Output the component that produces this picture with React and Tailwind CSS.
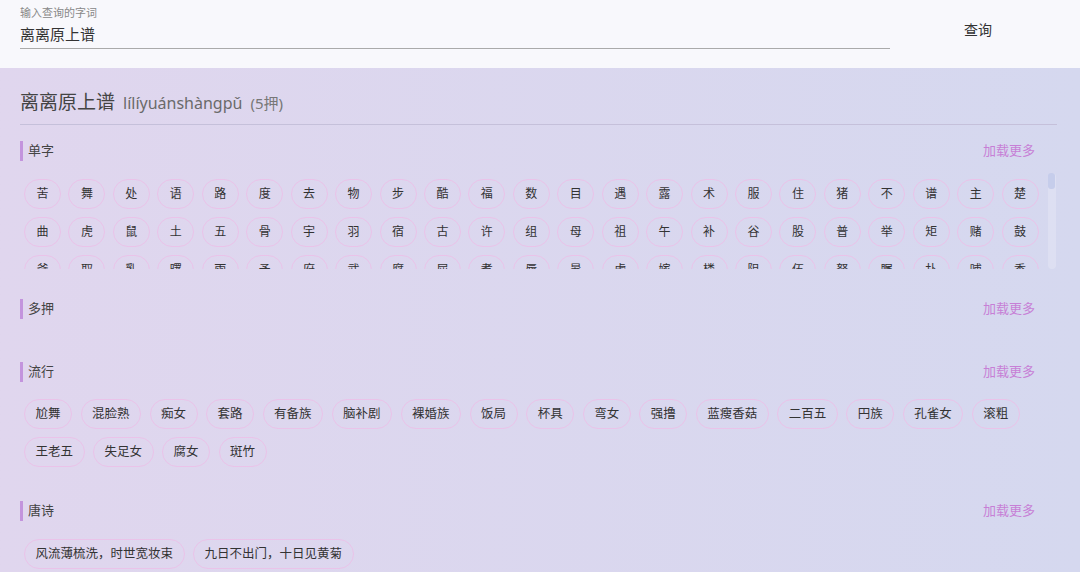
import React from "react";

const row1 = "苦舞处语路度去物步酷福数目遇露术服住猪不谱主楚".split("");
const row2 = "曲虎鼠土五骨宇羽宿古许组母祖午补谷股普举矩赌鼓".split("");
const row3 = "斧取乳曙雨予府武腐屈煮辱暑虏嫁楼阻伍努瞩扑哺秃".split("");
const singles = [...row1, ...row2, ...row3];

const popular = [
  "尬舞", "混脸熟", "痴女", "套路", "有备族", "脑补剧", "裸婚族", "饭局", "杯具", "弯女",
  "强撸", "蓝瘦香菇", "二百五", "円族", "孔雀女", "滚粗", "王老五", "失足女", "腐女", "斑竹",
];

const poems = ["风流薄梳洗，时世宽妆束", "九日不出门，十日见黄菊"];

const font = { fontFamily: '"Noto Sans", "Noto Sans CJK SC", sans-serif' };

function SectionHeader({ title }) {
  return (
    <div className="flex h-[20px] items-center justify-between pr-[22px]">
      <div className="flex h-[20px] items-center border-l-[3px] border-[#c394dd] pl-[5px] text-[13px] text-[#444]">
        {title}
      </div>
      <div className="text-[13px] text-[#c77fd6]">加载更多</div>
    </div>
  );
}

function Pill({ children }) {
  return (
    <div className="flex h-[30px] items-center justify-center rounded-full border border-[#eac3e9] px-[10.5px] text-[12.5px] text-[#333]">
      {children}
    </div>
  );
}

export default function App() {
  return (
    <div className="flex h-[572px] w-[1080px] flex-col overflow-hidden" style={font}>
      <header className="flex h-[68px] shrink-0 items-start bg-[#f8f8fc] px-[20px]">
        <div className="w-[870px] pt-[6px]">
          <div className="text-[11px] leading-[14px] text-[#888]">输入查询的字词</div>
          <div className="mt-[4px] border-b border-[#aaa] pb-[4px] text-[15px] leading-[20px] text-[#333]">
            离离原上谱
          </div>
        </div>
        <button className="ml-[74px] mt-[20px] text-[14px] leading-[20px] text-[#333]">查询</button>
      </header>

      <main className="flex-1 bg-gradient-to-r from-[#e0d6ee] to-[#d5d8ef] pl-[20px] pr-[23px]">
        <div className="flex items-baseline border-b border-[#c5c0da] pb-[8px] pt-[21px] leading-[26px]">
          <span className="text-[19px] text-[#444]">离离原上谱</span>
          <span className="ml-[8px] text-[16px] text-[#6a6a6a]">lílíyuánshàngpǔ</span>
          <span className="ml-[8px] text-[15px] text-[#777]">(5押)</span>
        </div>

        <div className="mt-[16px]">
          <SectionHeader title="单字" />
          <div className="mt-[12px] flex h-[96px] overflow-hidden">
            <div className="w-[1019px] pl-[4px] pt-[6px]">
              <div className="flex flex-wrap gap-x-[7.45px] gap-y-2">
                {singles.map((c, i) => (
                  <div
                    key={i}
                    className="flex h-[30px] w-[37px] items-center justify-center rounded-full border border-[#eac3e9] text-[12px] text-[#333]"
                  >
                    {c}
                  </div>
                ))}
              </div>
            </div>
            <div className="ml-[9px] h-full w-[8px] rounded-sm bg-white/20">
              <div className="h-[16px] w-[7px] rounded-[3px] bg-[#c6cdeb]" />
            </div>
          </div>
        </div>

        <div className="mt-[30px]">
          <SectionHeader title="多押" />
        </div>

        <div className="mt-[43px]">
          <SectionHeader title="流行" />
          <div className="mt-[17px] flex w-[1019px] flex-wrap gap-x-[8.5px] gap-y-2 pl-[4px]">
            {popular.map((p) => (
              <Pill key={p}>{p}</Pill>
            ))}
          </div>
        </div>

        <div className="mt-[34px]">
          <SectionHeader title="唐诗" />
          <div className="mt-[18px] flex flex-wrap gap-x-[8.5px] gap-y-2 pl-[4px]">
            {poems.map((p) => (
              <Pill key={p}>{p}</Pill>
            ))}
          </div>
        </div>
      </main>
    </div>
  );
}
